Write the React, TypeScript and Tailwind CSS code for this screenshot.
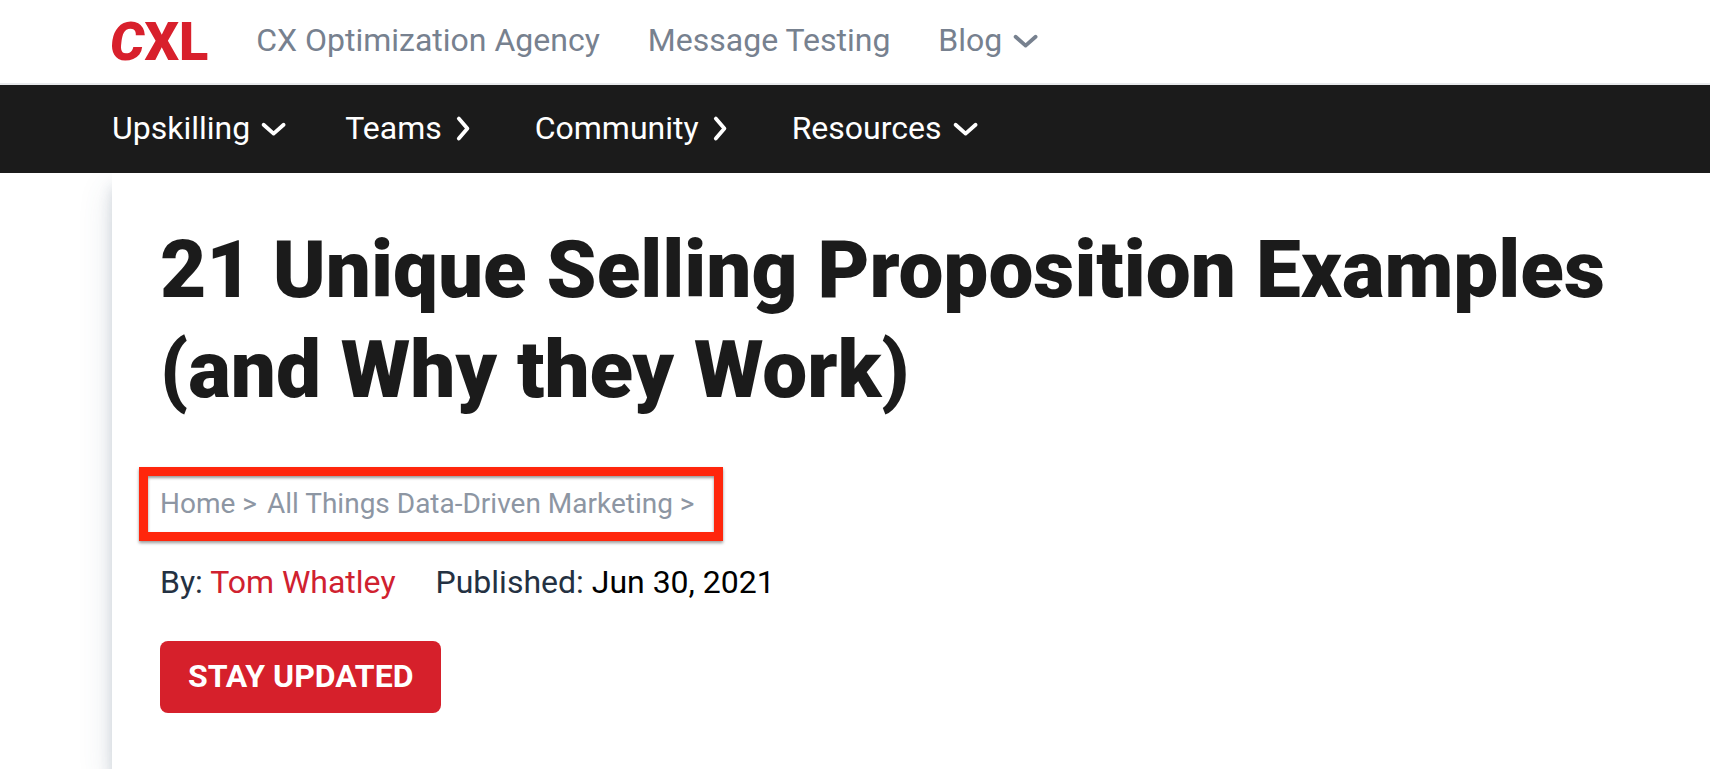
import React from "react";

type Direction = "down" | "right";

function Chevron({ direction }: { direction: Direction }) {
  return direction === "down" ? (
    <svg
      aria-hidden="true"
      viewBox="0 0 32 32"
      className="size-8 shrink-0"
      fill="none"
      stroke="currentColor"
      strokeWidth="3.8"
      strokeLinecap="round"
      strokeLinejoin="round"
    >
      <path d="M6.6 12.8L16.6 21.6L26.6 12.8" />
    </svg>
  ) : (
    <svg
      aria-hidden="true"
      viewBox="0 0 30 32"
      className="h-8 w-[30px] shrink-0"
      fill="none"
      stroke="currentColor"
      strokeWidth="3.8"
      strokeLinecap="round"
      strokeLinejoin="round"
    >
      <path d="M9.8 6.6L18.4 16.6L9.8 26.6" />
    </svg>
  );
}

interface NavItem {
  label: string;
  chevron?: Direction;
}

const siteLinks: NavItem[] = [
  { label: "CX Optimization Agency" },
  { label: "Message Testing" },
  { label: "Blog", chevron: "down" },
];

const sectionLinks: NavItem[] = [
  { label: "Upskilling", chevron: "down" },
  { label: "Teams", chevron: "right" },
  { label: "Community", chevron: "right" },
  { label: "Resources", chevron: "down" },
];

function NavLink({ label, chevron }: NavItem) {
  return (
    <a href="#" className="flex items-center gap-[7px] whitespace-nowrap">
      {label}
      {chevron && <Chevron direction={chevron} />}
    </a>
  );
}

export default function App() {
  return (
    <div className="flex min-h-screen flex-col overflow-hidden bg-white font-['Roboto',sans-serif] text-[32px] leading-12 text-[#1b1b1b]">
      <header className="relative z-10">
        <div className="flex items-start border-b-2 border-[#e8eaec] pt-4 pb-[17px] pl-[110px]">
          <a href="#" className="pt-0.5 text-[54px] font-black text-[#d8202c]">
            <span className="italic">C</span>XL
          </a>
          <nav aria-label="Site" className="ml-12 flex gap-12 text-[#77818f]">
            {siteLinks.map((item) => (
              <NavLink key={item.label} {...item} />
            ))}
          </nav>
        </div>
        <nav
          aria-label="Sections"
          className="flex gap-14 bg-[#1b1b1b] pt-[19px] pb-[21px] pl-28 text-white"
        >
          {sectionLinks.map((item) => (
            <NavLink key={item.label} {...item} />
          ))}
        </nav>
      </header>

      <main className="ml-28 flex grow flex-col items-start px-12 pt-[47px] pb-12 shadow-[0_14px_12px_rgba(60,85,110,0.18),0_16px_32px_rgba(60,85,110,0.16)]">
        <h1 className="text-[80px] leading-[100px] font-black">
          21 Unique Selling Proposition Examples (and Why they Work)
        </h1>
        <nav
          aria-label="Breadcrumb"
          className="mt-[47px] -ml-[21px] border-[9px] border-[#ff260c] px-3 pt-1 pb-1 text-[28px] text-[#8d96a3] shadow-[0_2px_3px_rgba(0,0,0,0.4),inset_0_2px_3px_rgba(0,0,0,0.4)]"
        >
          <ol className="flex gap-2.5 pr-2">
            <li>
              <a href="#">Home</a> &gt;
            </li>
            <li>
              <a href="#">All Things Data-Driven Marketing</a> &gt;
            </li>
          </ol>
        </nav>
        <div className="mt-[17px] flex gap-10 text-[#243142]">
          <p>
            By:{" "}
            <a href="#" className="text-[#d0212f]">
              Tom Whatley
            </a>
          </p>
          <p>
            Published: <time dateTime="2021-06-30" className="text-black">Jun 30, 2021</time>
          </p>
        </div>
        <button
          type="button"
          className="mt-[35px] rounded-lg bg-[#d6202b] px-7 pt-[11px] pb-[13px] font-bold text-white"
        >
          STAY UPDATED
        </button>
      </main>
    </div>
  );
}
